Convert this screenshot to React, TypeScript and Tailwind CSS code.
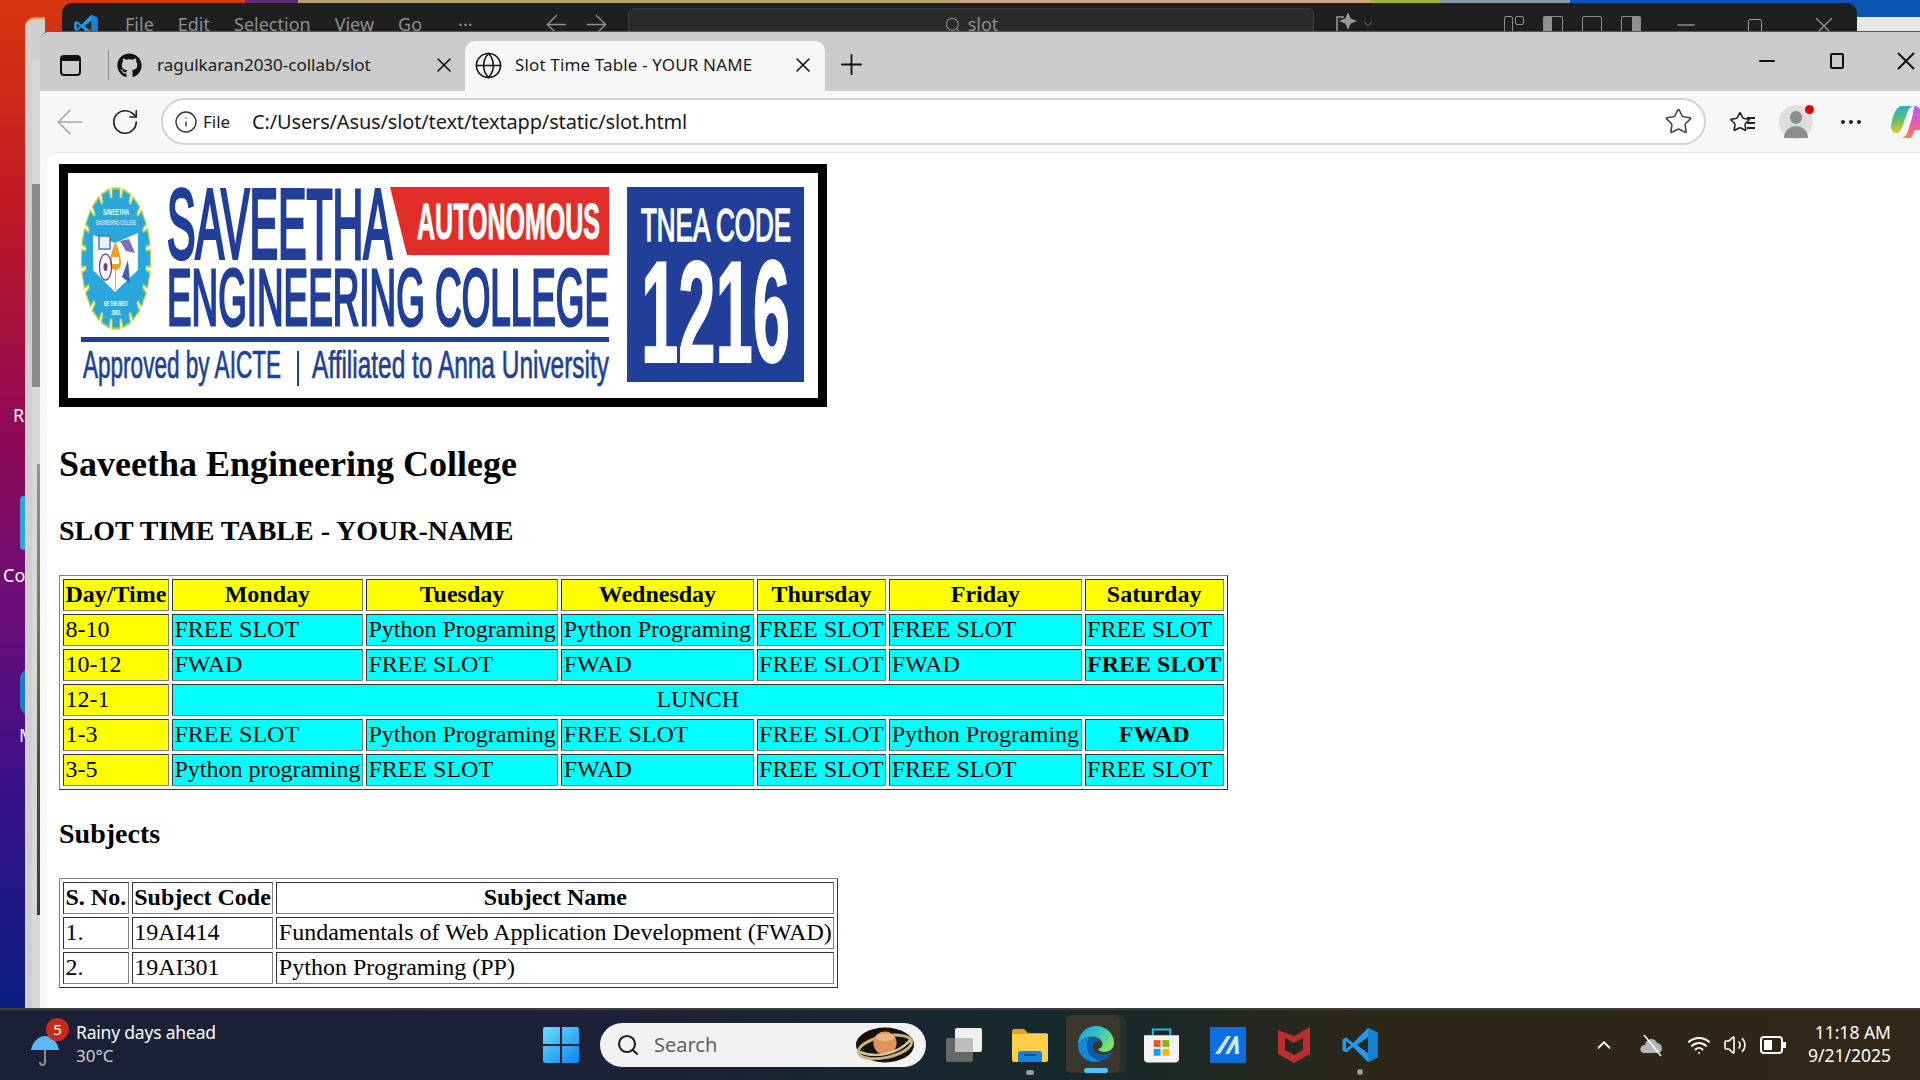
import React from "react";
import { ArrowLeft, RotateCw, Info, Star, Plus, X, Minus, Globe, Search, ChevronUp, Volume2, Wifi, ArrowRight, ChevronDown } from "lucide-react";
import { FaGithub } from "react-icons/fa";

const sans = "font-['Noto_Sans','Open_Sans',sans-serif]";

const yc = "border border-t-[#333] border-l-[#333] border-b-[#808080] border-r-[#808080] px-[1.5px] pt-[1px] pb-[2px] leading-[27px] bg-[#ffff00] text-left font-normal";
const yh = "border border-t-[#333] border-l-[#333] border-b-[#808080] border-r-[#808080] px-[1.5px] pt-[1px] pb-[2px] leading-[27px] bg-[#ffff00] text-center font-bold";
const cc = "border border-t-[#333] border-l-[#333] border-b-[#808080] border-r-[#808080] px-[1.5px] pt-[1px] pb-[2px] leading-[27px] bg-[#00ffff] text-left font-normal";
const ch = "border border-t-[#333] border-l-[#333] border-b-[#808080] border-r-[#808080] px-[1.5px] pt-[1px] pb-[2px] leading-[27px] bg-[#00ffff] text-center font-bold";
const cm = "border border-t-[#333] border-l-[#333] border-b-[#808080] border-r-[#808080] px-[1.5px] pt-[1px] pb-[2px] leading-[27px] bg-[#00ffff] text-center font-normal";
const wc = "border border-t-[#333] border-l-[#333] border-b-[#808080] border-r-[#808080] px-[1.5px] pt-[1px] pb-[2px] leading-[27px] bg-white text-left font-normal";
const wh = "border border-t-[#333] border-l-[#333] border-b-[#808080] border-r-[#808080] px-[1.5px] pt-[1px] pb-[2px] leading-[27px] bg-white text-center font-bold";
const tableBase = "border-separate border-spacing-[3px] border border-t-[#808080] border-l-[#808080] border-b-[#333] border-r-[#333] text-[24px] text-black";

type LogoTextProps = {
  x: number;
  y: number;
  w: number;
  nat: number;
  size: number;
  fill: string;
  bold?: boolean;
  stroke?: number;
  middle?: boolean;
  children: string;
};

function LogoText({ x, y, w, nat, size, fill, bold, stroke, middle, children }: LogoTextProps) {
  return (
    <text
      transform={`translate(${x} ${y}) scale(${w / nat} 1)`}
      fontSize={size}
      fontWeight={bold ? 700 : 400}
      fill={fill}
      stroke={stroke ? fill : undefined}
      strokeWidth={stroke}
      vectorEffect="non-scaling-stroke"
      textAnchor={middle ? "middle" : "start"}
      textLength={nat}
      lengthAdjust="spacingAndGlyphs"
    >
      {children}
    </text>
  );
}

function Logo() {
  const blue = "#213f99";
  const teeth = Array.from({ length: 20 }, (_, i) => (i * 360) / 20);
  return (
    <svg viewBox="0 0 750 225" className="block w-[750px] h-[225px] bg-white" style={{ fontFamily: "'Liberation Sans', sans-serif" }}>
      <g transform="translate(48 85.5) scale(1 2.03)">
        {teeth.map((a) => (
          <rect key={a} x="-4" y="-34.5" width="8" height="9" fill="#2aa7dd" stroke="#b9d13f" strokeWidth="1.1" transform={`rotate(${a})`} />
        ))}
        <circle r="29.5" fill="#2aa7dd" stroke="#2aa7dd" />
      </g>
      <polygon points="25,62 47,70 70,60 70,97 47,119 25,97" fill="#fff" />
      <path d="M47.5 68 C44 78 42 84 42 90 C42 94 44 97 47.5 97 C51 97 53 94 53 90 C53 84 51 78 47.5 68 Z" fill="#f0a020" />
      <rect x="44" y="84" width="7" height="7" fill="#fff" />
      <path d="M47.5 97 V117" stroke="#f0a020" strokeWidth="1" />
      <rect x="31" y="63" width="11" height="13" fill="#eaf1fb" stroke="#4d78c4" strokeWidth="1.5" />
      <ellipse cx="37.5" cy="94" rx="6" ry="13" fill="none" stroke="#6a3fa0" strokeWidth="1.3" />
      <ellipse cx="37.5" cy="94" rx="2" ry="4" fill="#6a3fa0" />
      <polygon points="52,68 61,66 67,80 58,78" fill="#7a6fb8" />
      <polygon points="60,87 62,110 54,104" fill="#3a5fb0" />
      <LogoText x={48} y={42} w={26} nat={49} size={9} bold middle fill="#fff">SAVEETHA</LogoText>
      <LogoText x={48} y={52} w={40} nat={94.4} size={8} middle fill="#fff">ENGINEERING COLLEGE</LogoText>
      <LogoText x={48} y={133} w={24} nat={52.9} size={8} bold middle fill="#fff">BE THE BEST</LogoText>
      <LogoText x={48} y={142} w={9} nat={17.8} size={8} bold middle fill="#fff">2001</LogoText>

      <LogoText x={99} y={85} w={225} nat={522} size={99} fill={blue} stroke={3}>SAVEETHA</LogoText>
      <polygon points="322,14 541,14 541,82 339,82" fill="#e32d28" />
      <LogoText x={349} y={66} w={183} nat={367} size={50} bold fill="#fff" stroke={0.8}>AUTONOMOUS</LogoText>
      <LogoText x={99} y={152} w={442} nat={932} size={79} fill={blue} stroke={2.4}>ENGINEERING COLLEGE</LogoText>
      <rect x="13" y="164" width="528" height="5" fill={blue} />
      <LogoText x={15} y={205} w={198} nat={336} size={38} fill={blue} stroke={0.6}>Approved by AICTE</LogoText>
      <rect x="229" y="178" width="2" height="35" fill={blue} />
      <LogoText x={244} y={205} w={297} nat={468} size={38} fill={blue} stroke={0.6}>Affiliated to Anna University</LogoText>
      <rect x="559" y="14" width="177" height="195" fill={blue} />
      <LogoText x={573} y={68} w={150} nat={274} size={47} fill="#fff" stroke={1.4}>TNEA CODE</LogoText>
      <LogoText x={573} y={189} w={149} nat={320} size={144} bold fill="#fff" stroke={1.5}>1216</LogoText>
    </svg>
  );
}

function VsCodeLogo({ className }: { className: string }) {
  return (
    <svg viewBox="0 0 36 36" className={className}>
      <path d="M26 1 L35.5 5.5 V30.5 L26 35 L11 20 L4 25.5 L0.5 23.5 V12.5 L4 10.5 L11 16 Z" fill="#1f9cf0" />
      <path d="M26 1 L35.5 5.5 V30.5 L26 35 Z" fill="#1583d2" />
      <path d="M26 10 L15 18 L26 26 Z" fill="#2a2618" />
      <path d="M4 14 L9 18 L4 22 Z" fill="#2a2618" />
    </svg>
  );
}

function EdgeLogo() {
  return (
    <svg viewBox="0 0 36 36" className="w-[36px] h-[36px]">
      <defs>
        <linearGradient id="edgeTop" x1="0" y1="0" x2="1" y2="0.6">
          <stop offset="0" stopColor="#1b9de2" />
          <stop offset="0.55" stopColor="#33c6c2" />
          <stop offset="1" stopColor="#7fe36a" />
        </linearGradient>
      </defs>
      <path d="M18 0 C29 0 36 8 36 17 C36 23 31 26 26 26 C23 26 21 25 20 23 C24 22 25 19 24 16 C22 11 16 10 11 11 C6 12 2 15 0 19 C0 8 8 0 18 0 Z" fill="url(#edgeTop)" />
      <path d="M0 19 C2 14 7 11.5 12 11.5 C9 15 8 20 10 25 C12 31 19 35 25 34 C21 36 17 36.5 13 35.5 C5 33.5 0 27 0 19 Z" fill="#1387d9" />
      <path d="M12 12 C16 10.5 21 12 23 15.5 C19 14 15 16 15 21 C15 26 20 29 26 28.5 C30 28 33 27 35 25 C33 30 29 33 25 34 C19 35 12 31 10 25 C8 20 9 15 12 12 Z" fill="#0d5ca8" />
    </svg>
  );
}

function Taskbar() {
  return (
    <div className={`h-[72px] shrink-0 relative flex items-center border-t-2 border-[#3e3e3e] bg-[linear-gradient(90deg,#1b2036_0%,#1d2138_30%,#16292c_55%,#2c2719_72%,#2f2718_100%)] text-white ${sans}`}>
      <div className="w-[76px] pl-[30px] relative h-full">
        <svg viewBox="0 0 30 34" className="absolute left-[30px] top-[23px] w-[30px] h-[34px]">
          <path d="M1 17 C3 7 10 3 15 3 C20 3 27 7 29 17 Z" fill="#5cb8f2" />
          <path d="M15 17 V29 C15 33 10 33 10 29" fill="none" stroke="#8c8c8c" strokeWidth="2" />
        </svg>
        <div className="absolute left-[46px] top-[8px] w-[23px] h-[23px] rounded-full bg-[#c42b1c] flex items-center justify-center text-[15px] leading-none">5</div>
      </div>
      <div className="w-[150px] flex flex-col -mt-[3px]">
        <span className="text-[17.5px] leading-[23px] whitespace-nowrap tracking-[-0.2px]">Rainy days ahead</span>
        <span className="text-[17px] leading-[23px] text-[#d0d0d0]">30°C</span>
      </div>
      <svg viewBox="0 0 36 36" className="ml-[317px] w-[36px] h-[36px]">
        <defs>
          <linearGradient id="win" x1="0" y1="0" x2="0.8" y2="1">
            <stop offset="0" stopColor="#6fdcfb" />
            <stop offset="1" stopColor="#0f8ff5" />
          </linearGradient>
        </defs>
        <path d="M0 2 Q0 0 2 0 H17 V17 H0 Z M19 0 H34 Q36 0 36 2 V17 H19 Z M0 19 H17 V36 H2 Q0 36 0 34 Z M19 19 H36 V34 Q36 36 34 36 H19 Z" fill="url(#win)" />
      </svg>
      <div className="ml-[21px] w-[326px] h-[44px] rounded-full bg-[#f1f2f1] flex items-center pl-[16px] pr-[9px]">
        <Search className="w-[24px] h-[24px] text-[#222]" strokeWidth={2.2} />
        <span className="ml-[14px] text-[20px] text-[#5f5f5f] leading-none">Search</span>
        <svg viewBox="0 0 64 38" className="ml-auto w-[62px] h-[38px] -translate-x-[1px]">
          <ellipse cx="32" cy="19" rx="30" ry="18" fill="#15110c" />
          <ellipse cx="32" cy="21" rx="28" ry="11" fill="none" stroke="#c9b483" strokeWidth="3" transform="rotate(-12 32 21)" />
          <circle cx="32" cy="17" r="12" fill="#e0935a" />
          <ellipse cx="32" cy="11" rx="10" ry="4" fill="#f0b57f" />
          <path d="M6 26 C20 32 44 30 58 14" fill="none" stroke="#d9c594" strokeWidth="2.5" />
        </svg>
      </div>
      <div className="ml-[20px] relative w-[36px] h-[34px]">
        <div className="absolute right-0 top-0 w-[27px] h-[24px] rounded-[2px] bg-[#f0f0f0]" />
        <div className="absolute left-0 bottom-0 w-[27px] h-[24px] rounded-[2px] bg-[#6a6a6a]/95" />
        <div className="absolute left-[9px] top-[10px] w-[18px] h-[14px] bg-[#bdbdbd]" />
      </div>
      <div className="ml-[30px] relative w-[36px] h-[34px]">
        <svg viewBox="0 0 36 34" className="w-[36px] h-[34px]">
          <path d="M0 4 Q0 1 2 1 H12 L16 5 H34 Q36 5 36 7 V10 H0 Z" fill="#e0a412" />
          <path d="M0 6 H36 V32 Q36 34 34 34 H2 Q0 34 0 32 Z" fill="#ffcf4a" />
          <path d="M6 34 V26 Q6 23 9 23 H27 Q30 23 30 26 V34 Z" fill="#1283d8" />
          <rect x="12" y="26" width="12" height="2" fill="#0b4f8f" />
        </svg>
        <div className="absolute left-[14px] top-[42px] w-[8px] h-[5px] rounded-full bg-[#9a9a9a]" />
      </div>
      <div className="ml-[18px] relative w-[54px] h-[58px] self-start mt-[5px]">
        <div className="absolute left-[6px] top-0 w-[54px] h-[58px] rounded-[6px] bg-[#3a382e]/40" />
        <div className="absolute left-0 top-0 w-[54px] h-[58px] rounded-[6px] bg-[#3a382e]" />
        <div className="absolute left-[12px] top-[11px]">
          <EdgeLogo />
        </div>
        <div className="absolute left-[18px] bottom-0 w-[24px] h-[5px] rounded-full bg-[#4cc2ff]" />
      </div>
      <svg viewBox="0 0 36 36" className="ml-[24px] w-[35px] h-[36px]">
        <path d="M9 8 V2 H27 V8" fill="none" stroke="#29b6e8" strokeWidth="2" />
        <path d="M0 8 H36 V32 Q36 36 32 36 H4 Q0 36 0 32 Z" fill="#f3f3f3" />
        <rect x="10" y="13" width="7" height="7" fill="#f25022" />
        <rect x="19" y="13" width="7" height="7" fill="#7fba00" />
        <rect x="10" y="22" width="7" height="7" fill="#00a4ef" />
        <rect x="19" y="22" width="7" height="7" fill="#ffb900" />
      </svg>
      <svg viewBox="0 0 36 36" className="ml-[31px] w-[36px] h-[36px]">
        <rect width="36" height="36" fill="#0b6fe0" />
        <path d="M5 27 L17 9 H21 L10 27 Z M15 27 L25 9 H28 L29 27 H25 L25 17 L19 27 Z" fill="#cfe3fb" />
      </svg>
      <svg viewBox="0 0 32 36" className="ml-[32px] w-[32px] h-[36px]">
        <path d="M0 3 L16 9 L32 0 V27 L16 36 L0 27 Z M7 11 V23 L16 28 L25 23 V11 L16 16 Z" fill="#b92e2e" />
      </svg>
      <div className="ml-[32px] relative w-[36px] h-[36px]">
        <VsCodeLogo className="w-[36px] h-[36px]" />
        <div className="absolute left-[15px] top-[42px] w-[6px] h-[6px] rounded-full bg-[#9a9a9a]" />
      </div>
      <ChevronUp className="ml-[215px] w-[22px] h-[22px] text-white" strokeWidth={2} />
      <svg viewBox="0 0 26 26" className="ml-[24px] w-[26px] h-[26px]">
        <path d="M5 21 C0 21 0 13 6 13 C7 6 16 5 18 11 C24 11 25 21 19 21 Z" fill="#b5b5b5" />
        <path d="M5 3 L22 24" stroke="#fff" strokeWidth="1.5" />
      </svg>
      <Wifi className="ml-[22px] w-[24px] h-[24px] text-white" strokeWidth={2} />
      <Volume2 className="ml-[12px] w-[24px] h-[24px] text-white" strokeWidth={1.6} />
      <svg viewBox="0 0 26 18" className="ml-[13px] w-[26px] h-[18px]">
        <rect x="1" y="1" width="21" height="16" rx="3" fill="none" stroke="#fff" strokeWidth="2" />
        <rect x="4" y="4" width="8" height="10" fill="#fff" />
        <rect x="23" y="6" width="3" height="6" fill="#fff" />
      </svg>
      <div className="ml-auto mr-[29px] flex flex-col items-end text-[17.5px] leading-[23px] -mt-[2px]">
        <span>11:18 AM</span>
        <span>9/21/2025</span>
      </div>
    </div>
  );
}

function VsCodeWindow() {
  const g = "#9a9a9a";
  return (
    <div className={`absolute left-[62px] top-[3px] w-[1795px] h-[60px] rounded-t-[10px] bg-[#1f1f1f] flex items-start pt-[8px] text-[#8f8f8f] text-[18px] leading-[26px] ${sans}`}>
      <VsCodeLogo className="ml-[12px] mt-[3px] w-[24px] h-[24px] shrink-0" />
      <div className="ml-[27px] w-[397px] shrink-0 flex gap-[24px]">
        <span>File</span>
        <span>Edit</span>
        <span>Selection</span>
        <span>View</span>
        <span>Go</span>
        <span className="ml-[12px]">···</span>
      </div>
      <ArrowLeft className="ml-[19px] -mt-[2px] w-[31px] h-[31px] shrink-0" strokeWidth={1.1} />
      <ArrowRight className="ml-[9px] -mt-[2px] w-[31px] h-[31px] shrink-0" strokeWidth={1.1} />
      <div className="ml-[16px] w-[686px] h-[40px] shrink-0 -mt-[3px] rounded-[6px] border border-[#3c3c3c] bg-[#2a2a2a] flex justify-center pt-[2px] gap-[6px]">
        <Search className="w-[18px] h-[18px] mt-[5px]" strokeWidth={1.4} />
        <span>slot</span>
      </div>
      <svg viewBox="0 0 24 24" className="ml-[20px] mt-[2px] w-[24px] h-[24px] shrink-0" fill="none" stroke={g} strokeWidth="1.5">
        <path d="M10 4 H3 V21 H8" />
        <path d="M14 1 L16 6 L21 8 L16 10 L14 15 L12 10 L7 8 L12 6 Z" fill={g} />
      </svg>
      <ChevronDown className="ml-[3px] mt-[6px] w-[14px] h-[14px] shrink-0" strokeWidth={1.5} />
      <div className="ml-[129px] mt-[5px] flex gap-[19px] shrink-0">
        <div className="w-[20px] h-[30px] flex gap-[2px]">
          <div className="w-[9px] h-full border border-[#8f8f8f] rounded-[2px]" />
          <div className="w-[9px] h-[9px] border border-[#8f8f8f] rounded-[2px]" />
        </div>
        <div className="w-[20px] h-[30px] border border-[#8f8f8f] rounded-[2px] border-l-[9px]" />
        <div className="w-[20px] h-[30px] border border-[#8f8f8f] rounded-[2px]" />
        <div className="w-[20px] h-[30px] border border-[#8f8f8f] rounded-[2px] border-r-[9px]" />
      </div>
      <Minus className="ml-[31px] w-[28px] h-[28px] shrink-0" strokeWidth={1.2} />
      <div className="ml-[48px] mt-[8px] w-[14px] h-[24px] border border-[#9a9a9a] rounded-[2px] shrink-0" />
      <X className="ml-[47px] w-[30px] h-[30px] shrink-0" strokeWidth={1.1} />
    </div>
  );
}

function Browser() {
  return (
    <div className="absolute left-[40px] top-[31px] right-0 bottom-0 rounded-tl-[10px] overflow-hidden flex flex-col bg-[#f7f7f7] border-t border-[#5a5a5a]">
      <div className={`h-[59px] shrink-0 bg-[#cccccc] flex items-end text-[#1a1a1a] text-[17px] ${sans}`}>
        <div className="h-[50px] flex items-center pl-[20px] pb-[2px]">
          <div className="w-[21px] h-[21px] border-2 border-[#111] rounded-[4px] relative">
            <div className="w-full h-[4px] bg-[#111]" />
          </div>
          <div className="ml-[27px] w-px h-[30px] bg-[#8a8a8a]" />
          <FaGithub className="ml-[8px] w-[25px] h-[25px] text-[#111]" />
          <span className="ml-[15px] w-[275px] whitespace-nowrap">ragulkaran2030-collab/slot</span>
          <X className="w-[24px] h-[24px] text-[#111]" strokeWidth={1.6} />
          <div className="w-[9px]" />
        </div>
        <div className="h-[50px] w-[360px] rounded-t-[10px] bg-[#f7f7f7] flex items-center pl-[9px] pb-[2px]">
          <Globe className="w-[29px] h-[29px] text-[#111]" strokeWidth={1.3} />
          <span className="ml-[12px] w-[276px] whitespace-nowrap tracking-[0.15px]">Slot Time Table - YOUR NAME</span>
          <X className="w-[24px] h-[24px] text-[#111]" strokeWidth={1.6} />
        </div>
        <Plus className="ml-[10px] mb-[10px] w-[33px] h-[33px] text-[#111]" strokeWidth={1.3} />
        <div className="ml-auto self-start mt-[14px] -mr-[1px] flex items-center">
          <Minus className="w-[24px] h-[24px] text-[#111]" strokeWidth={2} />
          <div className="ml-[51px] w-[14px] h-[16px] border-2 border-[#111] rounded-[2px]" />
          <X className="ml-[47px] w-[30px] h-[30px] text-[#111]" strokeWidth={1.5} />
        </div>
      </div>
      <div className={`h-[61px] shrink-0 bg-[#f7f7f7] flex items-center pl-[10px] ${sans}`}>
        <ArrowLeft className="w-[40px] h-[40px] text-[#a8a8a8] shrink-0" strokeWidth={1} />
        <RotateCw className="ml-[20px] w-[30px] h-[30px] text-[#222] shrink-0" strokeWidth={1.3} />
        <div className="ml-[21px] w-[1545px] h-[47px] shrink-0 rounded-full border-2 border-[#d2d2d2] bg-white flex items-center pl-[11px] pr-[11px] text-[#1a1a1a]">
          <Info className="w-[24px] h-[24px] text-[#333]" strokeWidth={1.4} />
          <span className="ml-[5px] text-[17px] w-[28px] pt-[1px]">File</span>
          <span className="ml-[21px] text-[20px] whitespace-nowrap tracking-[-0.15px] pt-[1px]">C:/Users/Asus/slot/text/textapp/static/slot.html</span>
          <Star className="ml-auto w-[29px] h-[29px] text-[#444]" strokeWidth={1.3} />
        </div>
        <div className="ml-[24px] relative w-[25px] h-[25px] shrink-0">
          <Star className="w-[22px] h-[22px] text-[#222] absolute -left-[1px] top-[2px]" strokeWidth={1.7} />
          <div className="absolute right-0 top-[8px] w-[8px] h-[2px] bg-[#222]" />
          <div className="absolute right-0 top-[13px] w-[8px] h-[2px] bg-[#222]" />
          <div className="absolute right-0 top-[18px] w-[8px] h-[2px] bg-[#222]" />
        </div>
        <div className="ml-[24px] relative w-[34px] h-[34px] rounded-full bg-[#dedede] shrink-0">
          <div className="absolute left-[11px] top-[6px] w-[12px] h-[13px] rounded-full bg-[#8e8e8e]" />
          <div className="absolute left-[5px] top-[21px] w-[24px] h-[12px] rounded-t-full bg-[#8e8e8e]" />
          <div className="absolute right-[-1px] top-[0px] w-[9px] h-[9px] rounded-full bg-[#e60000]" />
        </div>
        <div className="ml-[28px] flex gap-[4px] shrink-0">
          <div className="w-[4px] h-[4px] rounded-full bg-[#222]" />
          <div className="w-[4px] h-[4px] rounded-full bg-[#222]" />
          <div className="w-[4px] h-[4px] rounded-full bg-[#222]" />
        </div>
        <svg viewBox="0 0 34 32" className="ml-[30px] w-[34px] h-[32px] shrink-0">
          <defs>
            <linearGradient id="cpA" x1="0" y1="0" x2="0.2" y2="1">
              <stop offset="0" stopColor="#18a7e8" />
              <stop offset="0.6" stopColor="#66c36a" />
              <stop offset="1" stopColor="#f4c21f" />
            </linearGradient>
            <linearGradient id="cpB" x1="0.5" y1="0" x2="0.5" y2="1">
              <stop offset="0" stopColor="#b15ff0" />
              <stop offset="0.6" stopColor="#ee5fa8" />
              <stop offset="1" stopColor="#f4833c" />
            </linearGradient>
          </defs>
          <path d="M10 0 H24 C19 0 17 4 16 8 L10 24 C9 27 7 27 5 27 C2 27 0 24 0 20 C1 12 4 2 10 0 Z" fill="url(#cpA)" />
          <path d="M24 0 C28 0 30 4 32 10 C34 18 34 24 30 24 H24 L20 32 H10 C14 32 16 28 17 25 L22 8 C22 4 23 1 24 0 Z" fill="url(#cpB)" />
        </svg>
      </div>
      <div className="flex-1 min-h-0 pl-[7px]">
        <div className="h-full bg-white rounded-tl-[10px] border-t border-[#e8e8e8] pl-[12px] pt-[11px] font-['Liberation_Serif',serif] text-black">
          <div className="w-[768px] h-[243px] border-[9px] border-black">
            <Logo />
          </div>
          <h2 className="mt-[37px] text-[36px] leading-[41px] font-bold">Saveetha Engineering College</h2>
          <h3 className="mt-[30px] text-[28px] leading-[32px] font-bold">SLOT TIME TABLE - YOUR-NAME</h3>
          <table className={`mt-[28px] ${tableBase}`}>
            <tbody>
              <tr>
                {["Day/Time", "Monday", "Tuesday", "Wednesday", "Thursday", "Friday", "Saturday"].map((d) => (
                  <th key={d} className={yh}>{d}</th>
                ))}
              </tr>
              <tr>
                <td className={yc}>8-10</td>
                <td className={cc}>FREE SLOT</td>
                <td className={cc}>Python Programing</td>
                <td className={cc}>Python Programing</td>
                <td className={cc}>FREE SLOT</td>
                <td className={cc}>FREE SLOT</td>
                <td className={cc}>FREE SLOT</td>
              </tr>
              <tr>
                <td className={yc}>10-12</td>
                <td className={cc}>FWAD</td>
                <td className={cc}>FREE SLOT</td>
                <td className={cc}>FWAD</td>
                <td className={cc}>FREE SLOT</td>
                <td className={cc}>FWAD</td>
                <th className={ch}>FREE SLOT</th>
              </tr>
              <tr>
                <td className={yc}>12-1</td>
                <td className={cm} colSpan={6}>LUNCH</td>
              </tr>
              <tr>
                <td className={yc}>1-3</td>
                <td className={cc}>FREE SLOT</td>
                <td className={cc}>Python Programing</td>
                <td className={cc}>FREE SLOT</td>
                <td className={cc}>FREE SLOT</td>
                <td className={cc}>Python Programing</td>
                <th className={ch}>FWAD</th>
              </tr>
              <tr>
                <td className={yc}>3-5</td>
                <td className={cc}>Python programing</td>
                <td className={cc}>FREE SLOT</td>
                <td className={cc}>FWAD</td>
                <td className={cc}>FREE SLOT</td>
                <td className={cc}>FREE SLOT</td>
                <td className={cc}>FREE SLOT</td>
              </tr>
            </tbody>
          </table>
          <h3 className="mt-[28px] text-[28px] leading-[32px] font-bold">Subjects</h3>
          <table className={`mt-[28px] ${tableBase}`}>
            <tbody>
              <tr>
                <th className={wh}>S. No.</th>
                <th className={wh}>Subject Code</th>
                <th className={wh}>Subject Name</th>
              </tr>
              <tr>
                <td className={wc}>1.</td>
                <td className={wc}>19AI414</td>
                <td className={wc}>Fundamentals of Web Application Development (FWAD)</td>
              </tr>
              <tr>
                <td className={wc}>2.</td>
                <td className={wc}>19AI301</td>
                <td className={wc}>Python Programing (PP)</td>
              </tr>
            </tbody>
          </table>
        </div>
      </div>
    </div>
  );
}

export default function App() {
  return (
    <div className="w-[1920px] h-[1080px] overflow-hidden flex flex-col bg-black">
      <div className="flex-1 min-h-0 relative bg-[linear-gradient(180deg,#d8360e_0%,#c01a24_20%,#960a4e_40%,#6b0c78_60%,#34118a_80%,#0a1f82_100%)]">
        <div className="absolute left-[245px] top-0 w-[53px] h-[3px] bg-[#5e2a7a]" />
        <div className="absolute left-[298px] top-0 w-[662px] h-[3px] bg-[#b8a36a]" />
        <div className="absolute left-[960px] top-0 w-[410px] h-[3px] bg-[#d6a27a]" />
        <div className="absolute left-[1370px] top-0 w-[70px] h-[3px] bg-[#a8b040]" />
        <div className="absolute left-[1440px] top-0 w-[130px] h-[3px] bg-[#8a9aa8]" />
        <div className="absolute left-[1570px] top-0 w-[350px] h-[31px] bg-[#0d55b5]" />
        <div className="absolute left-[1857px] top-[17px] w-[63px] h-[14px] bg-[#e8e8e8]" />
        <span className={`absolute left-[13px] top-[403px] text-[18px] leading-[24px] text-white ${sans}`}>Re</span>
        <span className={`absolute left-[3px] top-[563px] text-[18px] leading-[24px] text-white ${sans}`}>Co</span>
        <span className={`absolute left-[19px] top-[723px] text-[18px] leading-[24px] text-white ${sans}`}>M</span>
        <div className="absolute left-[20px] top-[496px] w-[14px] h-[54px] rounded-[4px] bg-[#2aa6cf]" />
        <div className="absolute left-[20px] top-[667px] w-[26px] h-[50px] rounded-full bg-[#1a7fc0]" />
        <div className="absolute left-[25px] top-[17px] w-[20px] h-[991px] rounded-tl-[10px] bg-[#cfcfcf] border-t-2 border-[#e0a030]" />
        <div className="absolute left-[32px] top-[60px] w-[8px] h-[948px] bg-[#d8d8d8]" />
        <div className="absolute left-[32px] top-[184px] w-[8px] h-[203px] bg-[#8a8a8a]" />
        <div className="absolute left-[37px] top-[464px] w-[3px] h-[451px] bg-[linear-gradient(180deg,#8a9a9a,#7a7a50,#5a4a30,#3a3a3a)]" />
        <VsCodeWindow />
        <Browser />
      </div>
      <Taskbar />
    </div>
  );
}
